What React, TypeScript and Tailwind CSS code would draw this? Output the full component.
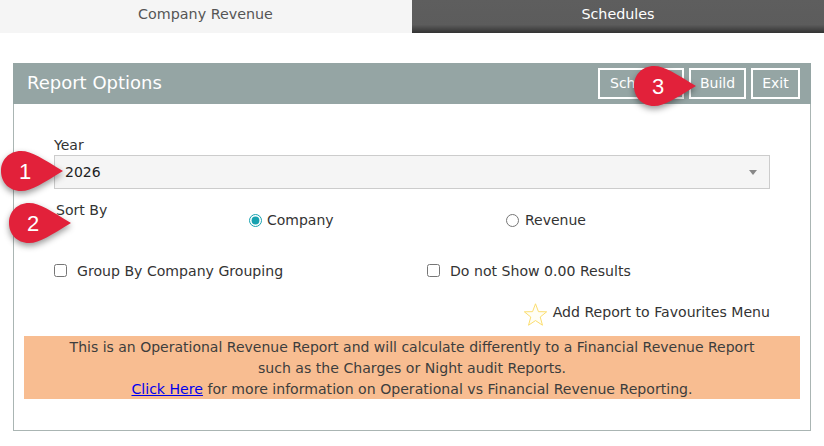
import React from "react";

function Pin({ n, className }: { n: string; className: string }) {
  return (
    <div className={"absolute w-[66px] h-[46px] " + className}>
      <svg width="66" height="46" viewBox="0 0 66 46" className="absolute left-0 top-0 drop-shadow-[0_3px_3px_rgba(0,0,0,0.4)]">
        <path d="M22 2 C33 2 44 10 64 22 C44 34 33 42 22 42 C10 42 2 33 2 22 C2 11 10 2 22 2 Z" fill="#e2213a" />
      </svg>
      <span className="absolute left-[6px] top-[2px] w-[40px] h-[40px] flex items-center justify-center text-white text-[22px] font-['Liberation_Sans',sans-serif]">
        {n}
      </span>
    </div>
  );
}

function HeaderButton({ children, className = "" }: { children: React.ReactNode; className?: string }) {
  return (
    <div className={"h-[31px] border-2 border-white flex items-center justify-center text-white text-[14px] " + className}>
      {children}
    </div>
  );
}

export default function App() {
  return (
    <div className="relative w-[824px] h-[446px] bg-white overflow-hidden font-['DejaVu_Sans',Verdana,sans-serif] text-[14px] text-[#333333]">
      <div className="flex h-[33px]">
        <div className="w-[412px] bg-[#f5f5f5] flex items-center justify-center text-[#555555] text-[14.3px] pb-[4px] pr-[1px]">
          Company Revenue
        </div>
        <div className="w-[412px] bg-gradient-to-b from-[#5e5e5e] via-[#5c5c5c] via-75% to-[#333333] flex items-center justify-center text-white text-[14.3px] pb-[4px]">
          Schedules
        </div>
      </div>

      <div className="mt-[30px] ml-[13px] w-[798px] h-[368px] border border-[#aab5b3] border-t-0">
        <div className="h-[41px] bg-[#95a5a4] flex items-center justify-between pl-[14px] pr-[11px] -ml-px -mr-px">
          <span className="text-white text-[18px] font-medium pb-[2px]">Report Options</span>
          <div className="flex gap-[5px] pb-[2px] pt-[1px]">
            <HeaderButton className="w-[86px] justify-start pl-[10px] mr-0">Schedule</HeaderButton>
            <HeaderButton className="w-[57px]">Build</HeaderButton>
            <HeaderButton className="w-[49px]">Exit</HeaderButton>
          </div>
        </div>

        <div className="pl-[10px] pr-[10px]">
          <div className="pl-[30px] pr-[30px] pt-[31px]">
            <div className="h-[20px] leading-[20px] text-[#333333]">Year</div>
            <div className="h-[34px] bg-[#f5f5f5] border border-[#cccccc] flex items-center justify-between pl-[10px] pr-[12px]">
              <span className="text-[#222222] text-[14px]">2026</span>
              <span className="w-0 h-0 border-l-[4px] border-r-[4px] border-t-[5px] border-l-transparent border-r-transparent border-t-[#888888]" />
            </div>
          </div>

          <div className="flex pl-[32px] mt-[13px] h-[40px]">
            <div className="w-[193px] leading-[17px] text-[14.1px]">Sort By</div>
            <label className="w-[257px] flex items-center h-[36px] pt-[0px] gap-[5px]">
              <input type="radio" name="sort" defaultChecked className="w-[13px] h-[13px] m-0 accent-[#17a2b0]" />
              <span>Company</span>
            </label>
            <label className="flex items-center h-[36px] gap-[6px]">
              <input type="radio" name="sort" className="w-[13px] h-[13px] m-0" />
              <span>Revenue</span>
            </label>
          </div>

          <div className="flex pl-[30px] mt-[16px] h-[28px] items-center text-[14.1px]">
            <label className="w-[373px] flex items-center gap-[10px]">
              <input type="checkbox" className="w-[13px] h-[13px] m-0 -mt-[2px]" />
              <span>Group By Company Grouping</span>
            </label>
            <label className="flex items-center gap-[10px]">
              <input type="checkbox" className="w-[13px] h-[13px] m-0 -mt-[2px]" />
              <span>Do not Show 0.00 Results</span>
            </label>
          </div>

          <div className="flex justify-end items-center pr-[30px] mt-[12px] h-[30px] gap-[5px] text-[14.1px]">
            <svg width="25" height="25" viewBox="0 0 28 28" fill="#fffef5" stroke="#fbdc6c" strokeWidth="1.1" className="mt-[2px]">
              <path d="M14 2 L17.3 10.8 L26.5 11 L19.3 16.8 L21.8 26 L14 20.8 L6.2 26 L8.7 16.8 L1.5 11 L10.7 10.8 Z" />
            </svg>
            <span>Add Report to Favourites Menu</span>
          </div>

          <div className="mt-[8px] h-[63px] pt-[1px] bg-[#f8bd91] text-center leading-[21px] text-[#3d3d3d] text-[14.1px]">
            <div className="text-[14px]">This is an Operational Revenue Report and will calculate differently to a Financial Revenue Report</div>
            <div>such as the Charges or Night audit Reports.</div>
            <div>
              <a href="#" className="text-[#0000ee] underline">Click Here</a> for more information on Operational vs Financial Revenue Reporting.
            </div>
          </div>
        </div>
      </div>

      <Pin n="1" className="left-[-1px] top-[149px]" />
      <Pin n="2" className="left-[7px] top-[201px]" />
      <Pin n="3" className="left-[632px] top-[64px]" />
    </div>
  );
}
